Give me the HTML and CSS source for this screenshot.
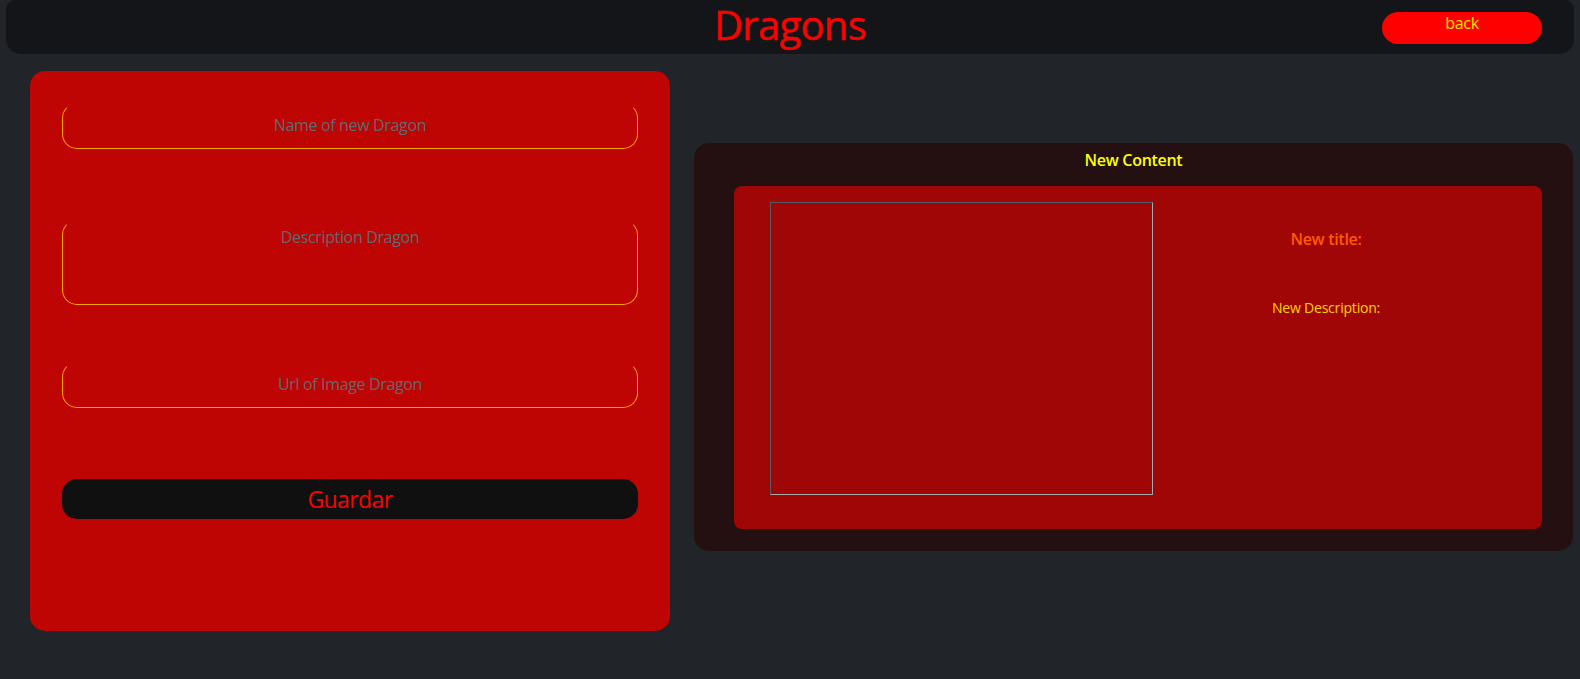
FILE: index.html
```html
<!DOCTYPE html>
<html lang="en">
<head>
<meta charset="utf-8">
<title>Dragons</title>
<link rel="stylesheet" href="styles.css">
</head>
<body>
<header class="topbar">
  <span class="spacer"></span>
  <h1 class="brand">Dragons</h1>
  <button class="back-btn" type="button">back</button>
</header>
<main class="layout">
  <form class="form-card">
    <input class="field field-name" type="text" placeholder="Name of new Dragon">
    <textarea class="field field-desc" placeholder="Description Dragon"></textarea>
    <input class="field field-url" type="text" placeholder="Url of Image Dragon">
    <button class="save-btn" type="button">Guardar</button>
  </form>
  <section class="preview">
    <h2 class="preview-title">New Content</h2>
    <div class="preview-box">
      <div class="preview-image"></div>
      <div class="preview-text">
        <h3 class="new-title">New title:</h3>
        <p class="new-desc">New Description:</p>
      </div>
    </div>
  </section>
</main>
</body>
</html>
```

FILE: styles.css
```css
* { box-sizing: border-box; }

html, body {
  height: 100%;
}

body {
  margin: 0;
  padding: 0 6px;
  background: #212429;
  font-family: "Open Sans", "Noto Sans", sans-serif;
  overflow: hidden;
}

.topbar {
  height: 54px;
  background: #141518;
  border-radius: 9px 9px 15px 15px;
  display: grid;
  grid-template-columns: 1fr auto 1fr;
  align-items: start;
}

.brand {
  margin: 0;
  font-size: 40px;
  font-weight: 500;
  line-height: 50px;
  color: #ff0000;
  letter-spacing: -0.7px;
  -webkit-text-stroke: 0.4px #ff0000;
}

.back-btn {
  justify-self: end;
  margin-top: 12px;
  margin-right: 32px;
  width: 160px;
  height: 32px;
  border: none;
  border-radius: 16px;
  background: #ff0000;
  color: #ffe600;
  font-family: inherit;
  font-size: 16px;
  line-height: 20px;
  padding: 1px 0 11px;
  letter-spacing: -0.3px;
}

.layout {
  display: flex;
  align-items: flex-start;
  padding-left: 24px;
  margin-top: 17px;
}

.form-card {
  width: 640px;
  height: 560px;
  flex: none;
  background: #bf0404;
  border-radius: 15px;
  padding: 32px;
  display: flex;
  flex-direction: column;
}

.field {
  display: block;
  width: 100%;
  background: transparent;
  border: 1px solid #ffa500;
  border-top-color: transparent;
  border-radius: 15px;
  text-align: center;
  font-family: inherit;
  font-size: 16px;
  color: #222;
  outline: none;
  letter-spacing: -0.35px;
}

.field::placeholder {
  color: #5f6a6e;
  opacity: 1;
}

.field-name {
  height: 46px;
  padding: 0 2px 3px;
}

.field-desc {
  margin-top: 71px;
  height: 85px;
  resize: none;
  padding-top: 6px;
  line-height: 20px;
}

.field-url {
  margin-top: 57px;
  height: 46px;
  padding: 0 2px 3px;
}

.save-btn {
  margin-top: 71px;
  height: 40px;
  width: 100%;
  border: none;
  border-radius: 15px;
  background: #101010;
  color: #ff0000;
  font-family: inherit;
  font-size: 23px;
  letter-spacing: -0.6px;
  padding: 0;
}

.preview {
  margin-top: 72px;
  margin-left: 24px;
  width: 879px;
  height: 408px;
  flex: none;
  background: #241010;
  border-radius: 15px;
  padding-top: 6px;
}

.preview-title {
  margin: 0;
  text-align: center;
  font-size: 16px;
  font-weight: 600;
  line-height: 22px;
  color: #ffff00;
  letter-spacing: -0.3px;
}

.preview-box {
  margin: 15px 0 0 40px;
  width: 808px;
  height: 343px;
  background: #a00606;
  border-radius: 8px;
  display: flex;
  padding: 16px 0 0 36px;
}

.preview-image {
  width: 383px;
  height: 293px;
  flex: none;
  border: 1px solid;
  border-color: #555b5e #a9a9a9 #a9a9a9 #555b5e;
}

.preview-text {
  width: 346px;
  text-align: center;
}

.new-title {
  margin: 26px 0 0;
  font-size: 16px;
  font-weight: 600;
  line-height: 22px;
  color: #ff5a00;
  letter-spacing: -0.3px;
}

.new-desc {
  margin: 48px 0 0;
  font-size: 14px;
  line-height: 20px;
  color: #ffd000;
  letter-spacing: -0.2px;
}
```
